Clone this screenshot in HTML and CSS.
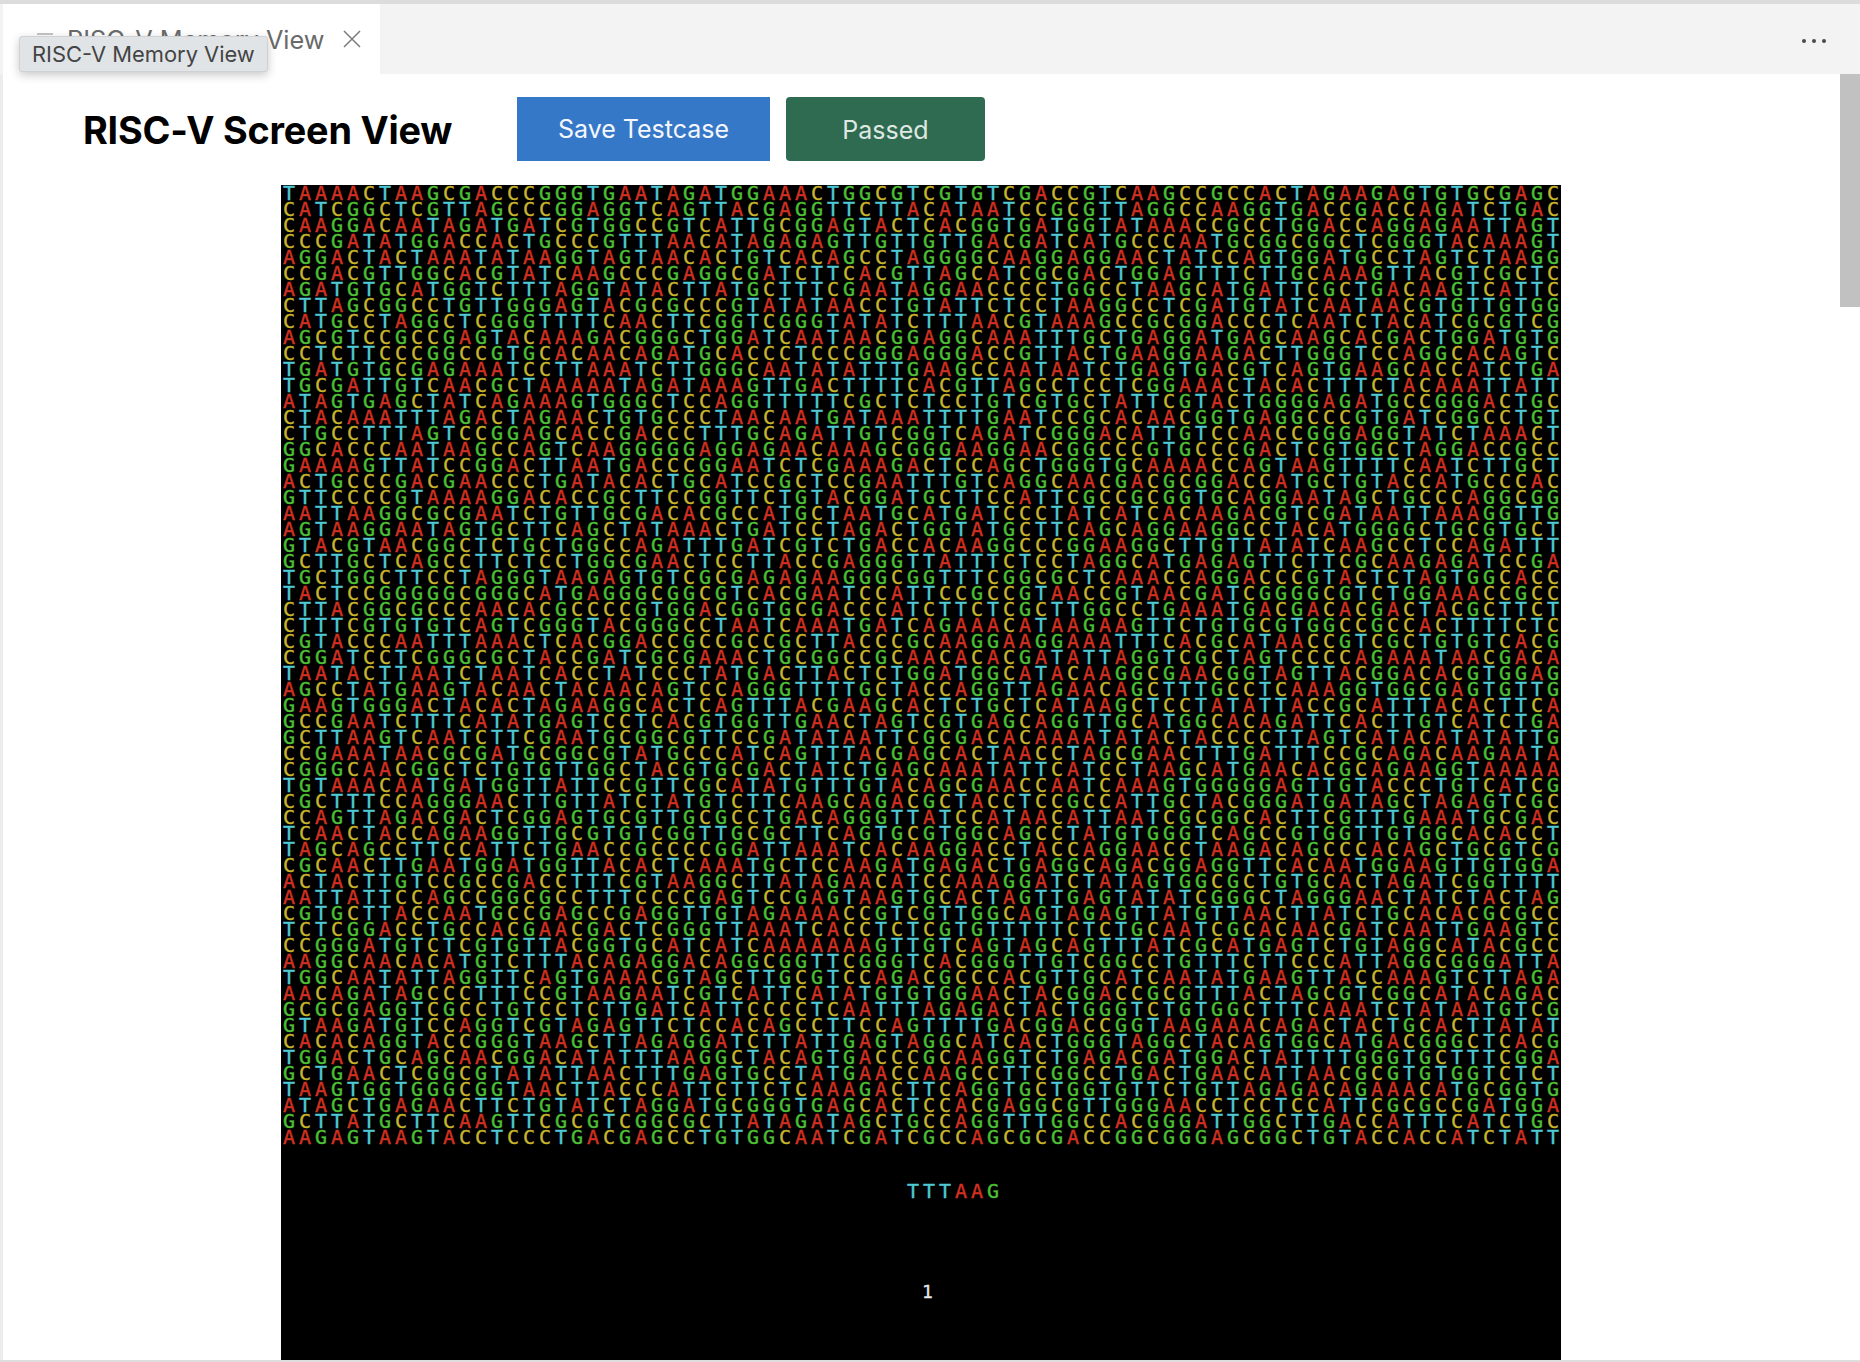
FILE: index.html
```
<!DOCTYPE html>
<html lang="en">
<head>
<meta charset="utf-8">
<title>RISC-V Screen View</title>
<link rel="stylesheet" href="styles.css">
</head>
<body>
<div class="window">
  <div class="topstrip"></div>
  <div class="tabbar">
    <div class="tab">
      <svg class="tab-icon" width="16" height="14" viewBox="0 0 16 14"><path d="M0 2h16M0 6h16M0 10h10" stroke="#8a8a8a" stroke-width="1.2" fill="none"/></svg>
      <span class="tab-title">RISC-V Memory View</span>
      <svg class="tab-close" width="18" height="18" viewBox="0 0 18 18"><path d="M1 1l16 16M17 1L1 17" stroke="#7a7a7a" stroke-width="1.5" fill="none"/></svg>
    </div>
    <div class="tab-actions"><i class="dot"></i><i class="dot"></i><i class="dot"></i></div>
  </div>
  <div class="body">
    <div class="leftstrip"></div>
    <main class="content">
      <header class="toolbar">
        <h1 class="title">RISC-V Screen View</h1>
        <button class="btn btn-save">Save Testcase</button>
        <button class="btn btn-pass">Passed</button>
      </header>
      <section class="screen">
        <div class="grid" id="grid">
<div class="row">TAAAACTAAGCGACCCGGGTGAATAGATGGAAACTGGCGTCGTGTCGACCGTCAAGCCGCCACTAGAAGAGTGTGCGAGC</div>
<div class="row">CATCGGCTCGTTAGCCCGGAGGTCAGTTACGAGGTTCTTACATAATCCGCGTTAGGCCAAGGTGACCGACCAGATCTGACG</div>
<div class="row">CAAGGACAATAGATGATCGTGGCCGTCATTGCGGAGTACTCACGGTGATGGTATAAACCGCCTGGACCAGGAGAATTAGT</div>
<div class="row">CCCGATATGGACCACTGCCCGTTTAACATAGAGAGTTGTTGTTGACGATCATGCCCAATGCGGCGGCTCGGGTACAAAGT</div>
<div class="row">AGGACTACTAAATATAAGGTAGTAACACTGTCACAGCCTAGGGGCAAGGAGGAACTATCCAGTGGATGCCTAGTCTAAGG</div>
<div class="row">CCGACGTTGGCACGTATCAAGCCCGAGGCGATCTTCACGTTAGCATCGCGACTGGAGTTTCTTGCAAAGTTACGTCGCTC</div>
<div class="row">AGATGTGCATGGTCTTTAGGTATACTTATGCTTTCGAATAGGAACCCCTGGCCTAAGCATGATTCGCTGACAAGTCATTC</div>
<div class="row">CTTAGCGGCCTGTTGGGAGTACGCGCCCGTATATAACCTGTATTCTCCTAAGGCCTCGATGTATCAATAACGTGTTGTG</div>
<div class="row">CATGCCTAGGCTCGGGTTTTCAACTTCGGTCGGGTATATCTTTAACGTAAAGCCGCGGACCCTCAATCTACATCGCGTC</div>
<div class="row">AGCGTCCGCCGAGTACAAAGACGGGCTGGATCAATAACGGAGGCAAATTTGCTGAGGATGAGCAAGCACGACTGGATGTGGT</div>
<div class="row">CCTCTTCCCGGCCGTGCACAACAGATGCACCCTCCCGGGAGGGACCGTTACTGAAGGAAGACTTGGGTCCAGGCACAGTC</div>
<div class="row">TGATGTGCGAGAAATCCTTAAATCTTGGGCAATATATTTGAAGCCAATAATCTGAGTGACGTCAGTGAAGCACCATCTGA</div>
<div class="row">TGCGATTGTCAACGCTAAAAATAGATAAAGTTGACTTTTCACGTTAGCCTCCTCGGAAACTACACTTTCTACAAATTAT</div>
<div class="row">ATAGTGAGCTATCAGAAAGTGGGCTCCAGGTTTTTCGCTCTCCTGTCGTGCTATTCGTACTGGGGAGATGCCGGGACTG</div>
<div class="row">CTACAAATTTAGACTAGAACTGTGCCCTAACAATGATAAATTTTGAATCCGCACAACGGTGAGGCCCGTGATCGGCCTGTC</div>
<div class="row">CTGCCTTTAGTCCGGAGCACCGACCCTTTGCAGATTGTCGGTCAGATCGGGACATTGTCCAACCGGGAGGTATCTAAACT</div>
<div class="row">GGCACCCAATAAGCCAGTCAAGGGGGAGGAGAACAAAGCGGGAAGGAACGGCCCGTGCCCGACTCGTGGCTAGGACCGC</div>
<div class="row">GAAAAGTTATCCGGACTTAATGACCCGGAATCTCGAAAGACTCCAGCTGGGTGCAAAACCAGTAAGTTTTCAATCTTGC</div>
<div class="row">ACTGCCCGACGAACCCTGATACACTGCATCCGCTCCGAATTTGTCAGGCAACGACGCGGACCATGCTGTACCATGCCCAC</div>
<div class="row">GTTCCCCGTAAAAGGACACCGCTTCCGGTTCTGTACGGATGCTTCCATTCGCCGCGGTGCAGGAATAGCTGCCCAGGCGGA</div>
<div class="row">AATTAAGGCGCGAATCTGTTGCGACACGCCATGCTAATGCATGATCCCTATCATCACAAGACGTCGATAATTAAAGGTT</div>
<div class="row">AGTAAGGAATAGTGCTTCAGCTATAAACTGATCCTAGACTGGTATGCTTCAGCAGGAAGGCCTACATGGGGCTGCGTGC</div>
<div class="row">GTACGTAACGGCTCTGCTGGCCAGATTTGATCGTCTGACCACAAGGCCCGGAAGGCTTGTTATATCAAGCCTCCAGATTT</div>
<div class="row">GCTTGCTCAGCCTTCTCCTGGCGAACTCCTTACCGAGGGTTATTTCTCCTAGGCATGAGAGTTCTTCGCAAGAGATCCGA</div>
<div class="row">TGCTGGCTTCCTAGGGTAAGAGTGTCGCGAGAGAAGGGCGGTTTCGGCGCTCAAACCAGGACCCGTACTCTAGTGGCAC</div>
<div class="row">TACTCCGGGGGCGGGCATGAGGGCGGCGTCACGAATCCATTCCGCCGTAACCGTAACGATCGGGGCGTCTGGAAACCGC</div>
<div class="row">CTTACGGCGCCCAACACGCCCCGTGGACGGTGCGACCCATCTTCTCGCTTGGCCTGAAATGACGACACGACTACGCTTCT</div>
<div class="row">CTTTCGTGTGTCAGTCGGGTACGGGCCTAATCAAATGATCAGAAACATAAGAAGTTCTGTGCGTGGCCGCCACTTTTCTCGC</div>
<div class="row">CGTACCCAATTTAAACTCACGGACCGCCGCCGCTTACCCGCAAGGAAGGAAATTTCACGCATAACCGTCGCTGTGTCACG</div>
<div class="row">CGGATCCTCGGGCGCTACCGATCGCGAAACTGCGGCCGCAACACACGATATTAGGTCGCTAGTCCCCAGAAATAACGACA</div>
<div class="row">TAATACTTAATCTAATCACCTATCCCTATGACTTACTCTGGATGGCATACAAGGCGAACGGTAGTTACGGACACGTGGA</div>
<div class="row">AGCCTATGAAGTACAACTACAACAGTCCAGGGTTTTGCTACCAGGTTAGAACAGCTTTGCCTCAAAGGTGGCGAGTGTTG</div>
<div class="row">GAAGTGGGACTACACTAGAAGGCACTCAGTTTACGAAGCACTCTGCTCATAAGCTCCTATATTACCGCATTTACACTTCA</div>
<div class="row">GCCGAATCTTTCATATGAGTCCTCACGTGGTTGAACTAGTCGTGAGCAGGTTGCATGGCACAGATTCACTTGTCATCTGA</div>
<div class="row">GCTTAAGTCAATCTTCGAATGCGGCGTTCCGATATAATTCGCGACACAAAATATACTACCCCTTAGTCATACATATATTG</div>
<div class="row">CCGAAATAACGCGATGCGGCGTATGCCCATCAGTTTACGAGCACTAACCTAGCGAACTTTGATTTCCGCAGACAAGAATA</div>
<div class="row">CGGGCAACGGCTCTGTGTTGGCTACGTGCGACTATCTGAGCAAATATTCATCCTAAGCATGAACACGCAGAAGGTAAA</div>
<div class="row">TGTAAACAATGATGGTTATTCCGTTCGCATATGTTTGTACAGCGAACCAATCAAAGTGGGGGAGTTGTACCCTGTCATCG</div>
<div class="row">CGCTTTCCAGGGAACTTGTTATCTATGTCTTCAAGCAGACGCTACCTCCGCCATTGCTACGGGATGATAGCTAGAGTCGC</div>
<div class="row">CCAGTTAGACGACTCGGAGTGCGTTGCGCCTGACAGGGTTATCCATAACATTAATCGCGGCACTTCGTTTGAAATGCGA</div>
<div class="row">TCAACTACCAGAAGGTTGCGTGTCGGTTGCGCTTCAGTGCGTGGCAGCCTATGTGGGTCAGCCGTGGTTGTGGCACACCT</div>
<div class="row">TAGCAGCCTTCCATTCTGAACCGCCCCGGATTAAATCACAAGGACCTACCAGGAACCTAAGACAGCCCACAGCTGCGT</div>
<div class="row">CGCAACTTGAATGGATGGTTACACTCAAATGCTCCAAGATGAGACTGAGGCAGACGGAGGTTCACAATGGAAGTTGTGGAC</div>
<div class="row">ACTACTTGTCCGCCGACCTTTCGTAAGGCTTATAGAACATCCAAAGGATCTATAGTGGCGCTGTGCACTAGATCGGTTTT</div>
<div class="row">AATTATTCCAGCCGGCGCCTTTCCCCGAGTCCGAGTAAGTGCACTAGTTGAGTATATCGGGCTAGGGAACTATCTACTAG</div>
<div class="row">CGTGCTTACCAATGCCGAGCCGAGGTTGTAGAAAACCGTCGTTGGCAGTAGAGTTATGTTAACTTATCTGCACACGCGC</div>
<div class="row">TCTCGGACCTGCCACGAACGACTCGGGTTAAATCACCTCTCGTGTTTTTCTCTGCAATCGCACAACGATCAATTGAAGTC</div>
<div class="row">CCGGGATGTCTCGTGTTACGGTGCATCATCAAAAAAAGTTGTCAGTAGCAGTTTATCGCATGAGTCTGTAGGCATACGC</div>
<div class="row">AAGGCAACACATGTCTTTACAGAGGACAGGCGGTTCGGGTCACGGGTTGTCGGCCTGTTTCTTCCCATTAGGCGGGATT</div>
<div class="row">TGGCAATATTAGGTTCAGTGAAACGTAGCTTGCGTCCAGACGCCCACGTTGCATCAATATGAAGTTACCAAAGTCTTAGA</div>
<div class="row">AACAGATAGCCCTTTCCGTAAGAATCGTCATTCATATGTGTGGAACTACGGACCGCGTTTACTAGCGTCGGCATACAGAC</div>
<div class="row">GCGCGAGGTCGCCTGTCCTCTTGATCATTCCCCTCAATTTAGAGACTACTGGGTCTGTGGCTTTCAAATCTATAATGTCG</div>
<div class="row">GTAAGATGTCCAGGTCGTAGAGTTCTCCACAGCCTTCCAGTTTTGACGGACCGGTAAGAAACAGACTACTGCACTTATAT</div>
<div class="row">CACACAGGTACCGGGTAAGCTTAGAGGATCTTATTGAGTAGGCATCACTGGGTAGGCTACAGTGGCATGACGGGCTCACG</div>
<div class="row">TGGACTGCAGCAACGGACATATTTAAGGCTACAGTGACCCGCAAGGTCTGAGACGATGGACTATTTTGGGTGCTTTCGGA</div>
<div class="row">GCTGAACTCGGCGTATATTAACTTTGAGTGCCTATGAACCAAGCCTTCGGCCTGACTGAACATTAACGCGTGTGGTCTCT</div>
<div class="row">TAAGTGGTGGGCGGTAACTTACCCATTCTTCTCAAAGACTTCAGGTGCTGGTGTTCTGTTAGAGACAGAAACATGCGGTG</div>
<div class="row">ATAGCTGAGAACTTCTGTATCTAGGATGCGGGTGAGCACTCCACGAGGCGTTGGGAACCTCCTCCATTCGCGCCGATGGA</div>
<div class="row">GCTTATGCTTCAAGTTCGCGTCGGCGCTTATAGATAGCTGCCAGGTTTGGCCACGGGATTGGCTTGACCATTTCATCTGC</div>
<div class="row">AAGAGTAAGTACCTCCCTGACGAGCCTGTGGCAATCGATCGCCAGCGCGACCGGCGGGAGCGGCTGTACCACCATCTAT</div>
        </div>
        <div class="row query" id="query">TTTAAG</div>
        <div class="count">1</div>
      </section>
    </main>
    <div class="scrolltrack"><div class="scrollthumb"></div></div>
  </div>
  <div class="tooltip">RISC-V Memory View</div>
</div>
<script src="script.js"></script>
</body>
</html>
```
FILE: styles.css
```
* { box-sizing: border-box; }
html, body { margin: 0; height: 1362px; overflow: hidden; background: #fff; }
body { font-family: Inter, "Liberation Sans", sans-serif; }

.window { position: relative; display: flex; flex-direction: column; height: 1362px; overflow: hidden; border-bottom: 2px solid #dedede; }
.topstrip { height: 4px; background: #dcdcdc; flex: none; }

.tabbar { height: 70px; flex: none; background: #f3f3f3; display: flex; justify-content: space-between; align-items: center; padding-left: 3px; }
.tab { width: 377px; height: 70px; background: #fff; display: flex; align-items: center; padding-left: 34px; }
.tab-icon { margin-right: 14px; flex: none; }
.tab-title { font-size: 25.3px; color: #6a6a6a; width: 267px; white-space: nowrap; }
.tab-close { margin-left: 9px; flex: none; }
.tab-actions { display: flex; gap: 6px; padding-right: 34px; margin-top: 4px; }
.dot { display: block; width: 4px; height: 4px; border-radius: 50%; background: #4a4a4a; }

.body { flex: 1; display: flex; min-height: 0; }
.leftstrip { width: 3px; flex: none; background: #ececec; }
.content { flex: 1; min-width: 0; overflow: hidden; }
.scrolltrack { width: 20px; flex: none; }
.scrollthumb { height: 233px; background: #c1c1c1; }

.toolbar { height: 111px; display: flex; align-items: center; padding-left: 80px; padding-bottom: 2px; }
.title { margin: 2px 65px 0 0; width: 369px; font-size: 37.8px; font-weight: 700; color: #000; white-space: nowrap; letter-spacing: -0.2px; }
.btn { height: 64px; border: 0; font-family: inherit; font-size: 25px; padding: 0; }
.btn-save { width: 253px; background: #3678c8; color: #f4f7fb; margin-right: 16px; }
.btn-pass { width: 199px; background: #2f6b50; color: #dfe8e2; border-radius: 4px; padding-top: 2px; }

.screen { width: 1280px; margin-left: 278px; background: #000; height: 1175px; }
.grid { height: 960px; }
.row { height: 16px; white-space: nowrap; display: flex; font-family: "DejaVu Sans Mono", monospace; font-size: 20px; line-height: 16px; -webkit-text-stroke: 0.4px currentColor; }
.cell { flex: none; width: 16px; text-align: center; }
.A { color: #d43022; }
.C { color: #c6b52c; }
.G { color: #4cc034; }
.T { color: #4fc8d4; }
.query { margin-top: 38px; padding-left: 624px; }
.count { margin-top: 85px; padding-left: 641px; font-family: "DejaVu Sans Mono", monospace; font-size: 18px; line-height: 16px; color: #e8e8e8; -webkit-text-stroke: 0.3px currentColor; }

.tooltip { position: absolute; left: 19px; top: 36px; width: 249px; height: 36px; background: #e1e4e7; border: 1px solid #cfd2d5; border-radius: 3px; box-shadow: 0 3px 10px rgba(0,0,0,.22); color: #444; font-size: 21.9px; line-height: 34px; padding-left: 12px; white-space: nowrap; }
```
FILE: script.js
```
var ROW_LENGTH = 80;
document.querySelectorAll('.grid .row, .query').forEach(function (row) {
  var text = row.textContent.trim();
  if (row.parentNode.id === 'grid') {
    text = text.slice(0, ROW_LENGTH);
    while (text.length < ROW_LENGTH) {
      text += text[text.length - 3];
    }
  }
  row.textContent = '';
  for (var i = 0; i < text.length; i++) {
    var s = document.createElement('span');
    s.className = 'cell ' + text[i];
    s.textContent = text[i];
    row.appendChild(s);
  }
});
```
